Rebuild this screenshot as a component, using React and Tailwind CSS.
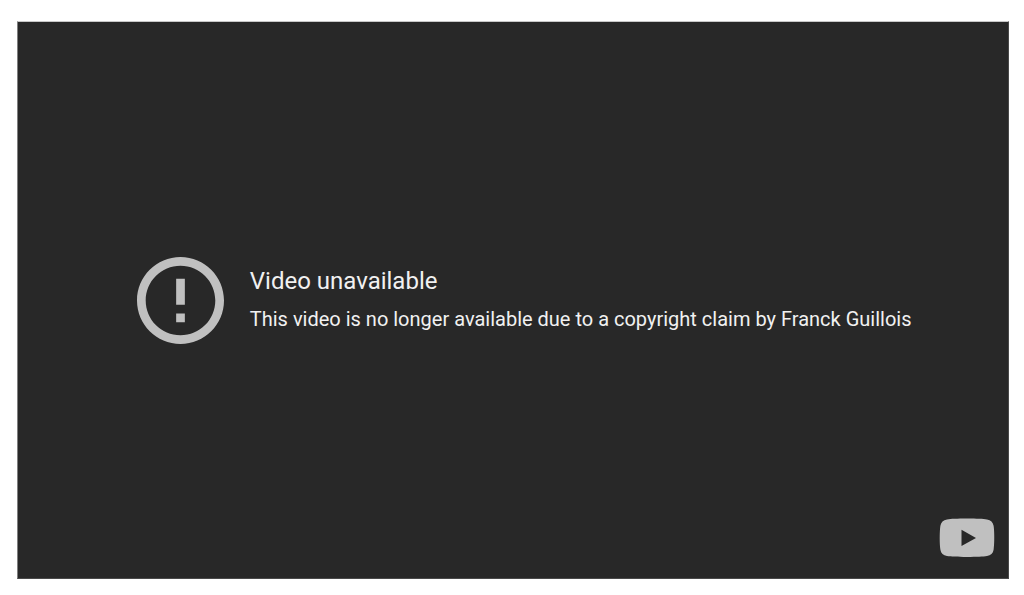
import React from "react";

const ErrorIcon = () => (
  <svg
    viewBox="2 2 20 20"
    className="size-[87px] shrink-0 fill-[#c0c0c0]"
    aria-hidden="true"
  >
    <path d="M11 15h2v2h-2zm0-8h2v6h-2zm1-5C6.48 2 2 6.48 2 12s4.48 10 10 10 10-4.48 10-10S17.52 2 12 2zm0 18c-4.42 0-8-3.58-8-8s3.58-8 8-8 8 3.58 8 8-3.58 8-8 8z" />
  </svg>
);

const YoutubeIcon = () => (
  <svg
    viewBox="0 0 56 40"
    className="h-10 w-14 fill-[#c0c0c0]"
    aria-hidden="true"
  >
    <path
      fillRule="evenodd"
      d="M28 .6C18 .6 12 .9 8 1.500C4.200 2.100 2 4.200 1.400 7.800C.5 13 .5 26.500 1.400 31.700C2 35.300 4.200 37.300 8 38C12 38.600 18 38.900 28 38.900S44 38.600 48 38C51.800 37.300 54 35.300 54.600 31.700C55.500 26.500 55.500 13 54.600 7.800C54 4.200 51.800 2.100 48 1.500C44 .9 38 .6 28 .6ZM22.500 11.800L37 20L22.500 28Z"
    />
  </svg>
);

export default function App() {
  return (
    <div className="flex h-screen bg-white pt-[21px] pr-[15px] pb-4 pl-[17px] font-['Roboto',sans-serif]">
      <main className="flex flex-1 flex-col border border-t-[#c8c8c8] border-r-[#4a4a4a] border-b-[#4a4a4a] border-l-[#808080] bg-[#282828] text-[#f1f1f1]">
        <div className="h-20 shrink-0" />
        <section className="flex flex-1 items-center gap-[26px] pr-4 pl-[12%]">
          <ErrorIcon />
          <div className="pb-0.5">
            <h1 className="text-2xl leading-8">Video unavailable</h1>
            <p className="mt-2 text-xl leading-7">
              This video is no longer available due to a copyright claim by
              Franck Guillois
            </p>
          </div>
        </section>
        <footer className="flex h-20 shrink-0 items-end justify-end pr-[13px] pb-5">
          <a href="#youtube" aria-label="Watch on YouTube">
            <YoutubeIcon />
          </a>
        </footer>
      </main>
    </div>
  );
}
